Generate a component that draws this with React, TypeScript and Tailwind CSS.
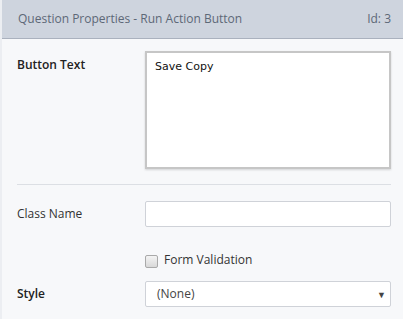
import { useState } from "react";

const font = { fontFamily: '"Open Sans", "Noto Sans", sans-serif' };

export default function App() {
  const [checked, setChecked] = useState(false);

  return (
    <div className="w-[403px] h-[319px] overflow-hidden bg-[#f7f8fa] border-l-2 border-[#eceef2]" style={font}>
      <div className="h-[39px] bg-[#ced4de] border-b border-[#aab1be] flex items-center justify-between pl-4 pr-[12px] text-[12px] text-[#5d6877]">
        <span>Question Properties - Run Action Button</span>
        <span>Id: 3</span>
      </div>

      <div className="pl-[15px] pr-[12px]">
        <div className="flex pt-[12px] pb-[15px]">
          <label className="w-[128px] pt-[5px] text-[12px] font-semibold text-[#222]">Button Text</label>
          <textarea
            defaultValue="Save Copy"
            className="w-[246px] h-[118px] resize-none bg-white border-2 border-[#c6c6c6] shadow-[0_1px_2px_rgba(0,0,0,0.15)] px-[8px] py-[6px] text-[11px] text-[#111] outline-none"
            style={{ fontFamily: '"DejaVu Sans", Verdana, sans-serif' }}
          />
        </div>

        <div className="border-t border-[#dcdfe4]" />

        <div className="flex items-center pt-[16px]">
          <label className="w-[128px] text-[12px] text-[#333]">Class Name</label>
          <input
            type="text"
            className="w-[246px] h-[26px] bg-white border border-[#cfd2d8] rounded-[2px] px-2 text-[12px] outline-none"
          />
        </div>

        <div className="flex items-center pl-[128px] pt-[18px] h-[47px]">
          <label className="flex items-center gap-[6px] text-[12px] text-[#333] cursor-pointer">
            <span
              onClick={() => setChecked(!checked)}
              className="w-[13px] h-[13px] mt-[3px] rounded-[2px] border border-[#a9a9a9] bg-gradient-to-b from-[#f4f4f4] to-[#d8d8d8]"
            />
            Form Validation
          </label>
        </div>

        <div className="flex items-center pt-[7px]">
          <label className="w-[128px] text-[12px] font-semibold text-[#222]">Style</label>
          <div className="relative w-[246px] h-[26px] bg-white border border-[#cfd2d8] rounded-[2px] flex items-center pl-[11px] text-[12px] text-[#444]">
            (None)
            <span className="absolute right-[4px] top-[6px] text-[9px] text-[#444]">▼</span>
          </div>
        </div>
      </div>
    </div>
  );
}
